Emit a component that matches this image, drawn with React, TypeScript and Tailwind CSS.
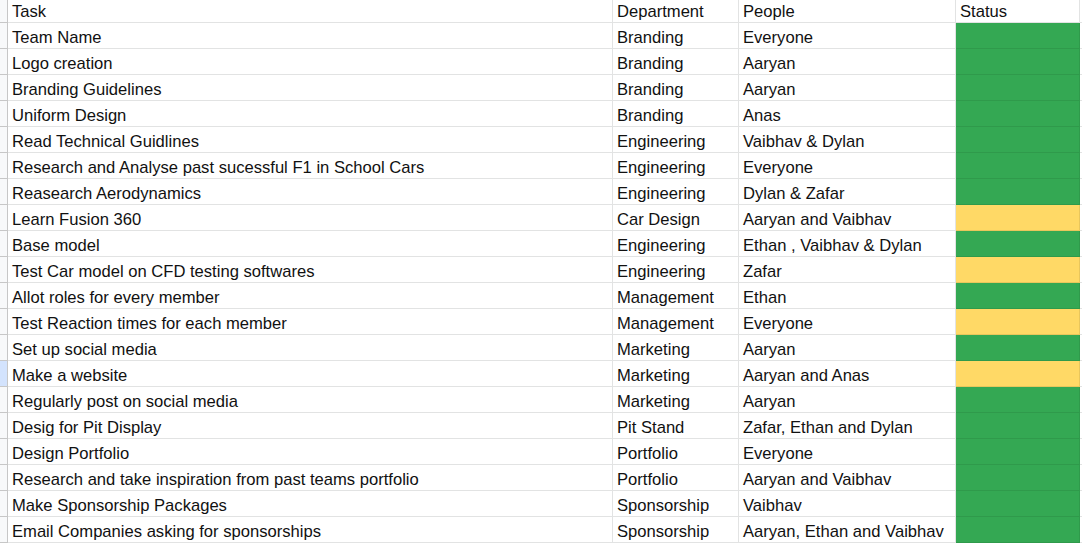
import React from 'react';

type Row = { task: string; dept: string; people: string; status: 'done' | 'progress' };

const rows: Row[] = [
  { task: 'Team Name', dept: 'Branding', people: 'Everyone', status: 'done' },
  { task: 'Logo creation', dept: 'Branding', people: 'Aaryan', status: 'done' },
  { task: 'Branding Guidelines', dept: 'Branding', people: 'Aaryan', status: 'done' },
  { task: 'Uniform Design', dept: 'Branding', people: 'Anas', status: 'done' },
  { task: 'Read Technical Guidlines', dept: 'Engineering', people: 'Vaibhav & Dylan', status: 'done' },
  { task: 'Research and Analyse past sucessful F1 in School Cars', dept: 'Engineering', people: 'Everyone', status: 'done' },
  { task: 'Reasearch Aerodynamics', dept: 'Engineering', people: 'Dylan & Zafar', status: 'done' },
  { task: 'Learn Fusion 360', dept: 'Car Design', people: 'Aaryan and Vaibhav', status: 'progress' },
  { task: 'Base model', dept: 'Engineering', people: 'Ethan , Vaibhav & Dylan', status: 'done' },
  { task: 'Test Car model on CFD testing softwares', dept: 'Engineering', people: 'Zafar', status: 'progress' },
  { task: 'Allot roles for every member', dept: 'Management', people: 'Ethan', status: 'done' },
  { task: 'Test Reaction times for each member', dept: 'Management', people: 'Everyone', status: 'progress' },
  { task: 'Set up social media', dept: 'Marketing', people: 'Aaryan', status: 'done' },
  { task: 'Make a website', dept: 'Marketing', people: 'Aaryan and Anas', status: 'progress' },
  { task: 'Regularly post on social media', dept: 'Marketing', people: 'Aaryan', status: 'done' },
  { task: 'Desig for Pit Display', dept: 'Pit Stand', people: 'Zafar, Ethan and Dylan', status: 'done' },
  { task: 'Design Portfolio', dept: 'Portfolio', people: 'Everyone', status: 'done' },
  { task: 'Research and take inspiration from past teams portfolio', dept: 'Portfolio', people: 'Aaryan and Vaibhav', status: 'done' },
  { task: 'Make Sponsorship Packages', dept: 'Sponsorship', people: 'Vaibhav', status: 'done' },
  { task: 'Email Companies asking for sponsorships', dept: 'Sponsorship', people: 'Aaryan, Ethan and Vaibhav', status: 'done' },
];

const cols = 'grid grid-cols-[8px_605px_126px_217px_124px_1fr]';
const cell = 'border-r border-b border-[#e2e3e3] pl-[4px] flex items-end whitespace-nowrap overflow-hidden';

export default function App() {
  return (
    <div
      className="w-[1082px] h-[544px] overflow-hidden bg-white text-[16.6px] leading-[20px] text-[#111]"
      style={{ fontFamily: '"Liberation Sans", Arial, sans-serif' }}
    >
      {/* header row */}
      <div className={`${cols} h-[23px]`}>
        <div className="border-r border-b border-[#c7c7c7] bg-[#f8f9fa]"></div>
        <div className={cell}>Task</div>
        <div className={cell}>Department</div>
        <div className={cell}>People</div>
        <div className={cell}>Status</div>
        <div className="border-b border-[#e2e3e3]"></div>
      </div>

      {rows.map((r) => {
        const selected = r.task === 'Make a website';
        return (
          <div key={r.task} className={`${cols} h-[26px]`}>
            <div className={`border-r border-b border-[#c7c7c7] ${selected ? 'bg-[#d3e3fd]' : 'bg-[#f8f9fa]'}`}></div>
            <div className={cell}>{r.task}</div>
            <div className={cell}>{r.dept}</div>
            <div className={cell}>{r.people}</div>
            <div
              className={`border-r border-b ${
                r.status === 'done' ? 'bg-[#34a853] border-[#2f9a4b]' : 'bg-[#ffd966] border-[#e9c65c]'
              }`}
            ></div>
            <div className="border-b border-[#e2e3e3]"></div>
          </div>
        );
      })}
    </div>
  );
}
